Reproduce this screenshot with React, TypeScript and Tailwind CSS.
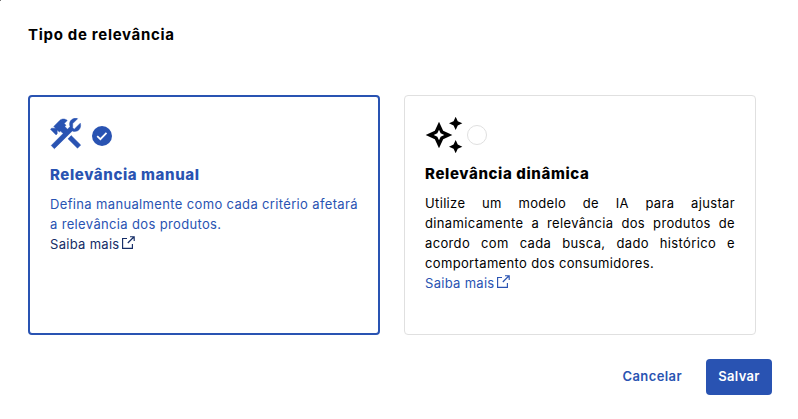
import { MdOutlineAutoAwesome } from "react-icons/md";

function ExternalIcon() {
  return (
    <svg width="13" height="13" viewBox="0 0 13 13" fill="none" stroke="currentColor" strokeWidth="1.15" className="ml-[2px] -mt-[3px] shrink-0">
      <path d="M5 2.5H0.6V12.4H10.4V8M5.8 7L11.8 1M8 0.7H12.2V5" />
    </svg>
  );
}

function ToolsIcon() {
  return (
    <svg width="32" height="32" viewBox="0 0 32 32" fill="currentColor" stroke="currentColor" strokeWidth="0.5" strokeLinejoin="round" className="mt-px">
      <path d="M18 20.8L21.2 17.6L30.7 27L27.5 30.2Z" />
      <path d="M24.2 11.3L27.7 7.8L30.3 5.2C31.3 8.6 29.9 12 26.8 13.1C25.3 13.6 23.6 13.5 22.3 12.9L4.4 30.7L1.2 27.5L13.1 15.6L10.5 13L9.4 14.1L7.2 11.9V15.8L6.1 16.9L0.5 11.3L1.6 10.2H5.6L3.8 8.4L9.7 2.5C11.7 0.5 15.2 0.5 17.2 2.5L14.2 5.5L16 7.3L14.8 8.5L17.5 11.2L20.1 8.6C18.8 5 20.3 1.7 23.8 0.6C25.2 0.2 26.6 0.3 27.6 0.7L22.7 5.6V9.8Z" />
    </svg>
  );
}

function CheckedRadio() {
  return (
    <svg width="20" height="20" viewBox="0 0 20 20">
      <circle cx="10" cy="10" r="10" fill="#2953b2" />
      <path d="M5.2 10.2L8.4 13.2L14.5 6.9" fill="none" stroke="#fff" strokeWidth="1.8" />
    </svg>
  );
}

export default function App() {
  return (
    <div className="relative h-[419px] w-[798px] overflow-hidden bg-white pt-[24px] pl-[28px] font-['Inter',sans-serif] text-[13px] leading-5 text-black">
      <h2 className="h-[71px] text-[15px] leading-[22px] font-bold tracking-[0.7px] whitespace-nowrap">Tipo de relevância</h2>
      <div className="flex gap-6">
        <section className="h-[240px] w-[352px] rounded-[4px] border-2 border-[#2953b2] px-5 pt-4 text-[#2953b2]">
          <div className="flex h-[40px] items-center">
            <ToolsIcon />
            <span className="mt-[6px] ml-[10px]">
              <CheckedRadio />
            </span>
          </div>
          <h3 className="mt-[11px] h-[30px] text-[15px] leading-[22px] font-extrabold tracking-[0.6px] whitespace-nowrap">Relevância manual</h3>
          <p className="tracking-[0.35px] whitespace-nowrap">
            Defina manualmente como cada critério afetará
            <br />a relevância dos produtos.
          </p>
          <a className="flex items-center tracking-[0.3px] text-[#142c66]">
            Saiba mais
            <ExternalIcon />
          </a>
        </section>
        <section className="h-[240px] w-[352px] rounded-[4px] border border-[#e0e0e0] px-5 pt-4">
          <div className="flex h-[45px] items-center">
            <MdOutlineAutoAwesome className="-ml-[1px] size-10" />
            <span className="ml-[3px] size-5 rounded-full border border-[#e0e0e0]" />
          </div>
          <h3 className="mt-[6px] h-[30px] text-[15px] leading-[22px] font-extrabold tracking-[0.62px] whitespace-nowrap">Relevância dinâmica</h3>
          <p className="text-justify tracking-[0.35px]">
            Utilize um modelo de IA para ajustar dinamicamente a relevância dos produtos de acordo com cada busca, dado histórico e comportamento dos consumidores.
          </p>
          <a className="flex items-center tracking-[0.3px] text-[#2953b2]">
            Saiba mais
            <ExternalIcon />
          </a>
        </section>
      </div>
      <div className="mt-6 mr-[26px] flex justify-end">
        <button className="mr-3 h-9 px-3 pb-[2px] text-[13px] font-semibold tracking-[0.4px] text-[#2953b2]">Cancelar</button>
        <button className="h-9 w-[66px] rounded-[4px] bg-[#2953b2] pb-[2px] text-[13px] font-semibold tracking-[0.3px] text-white">Salvar</button>
      </div>
      <span className="absolute top-0 left-0 size-px bg-[#777]" />
    </div>
  );
}
